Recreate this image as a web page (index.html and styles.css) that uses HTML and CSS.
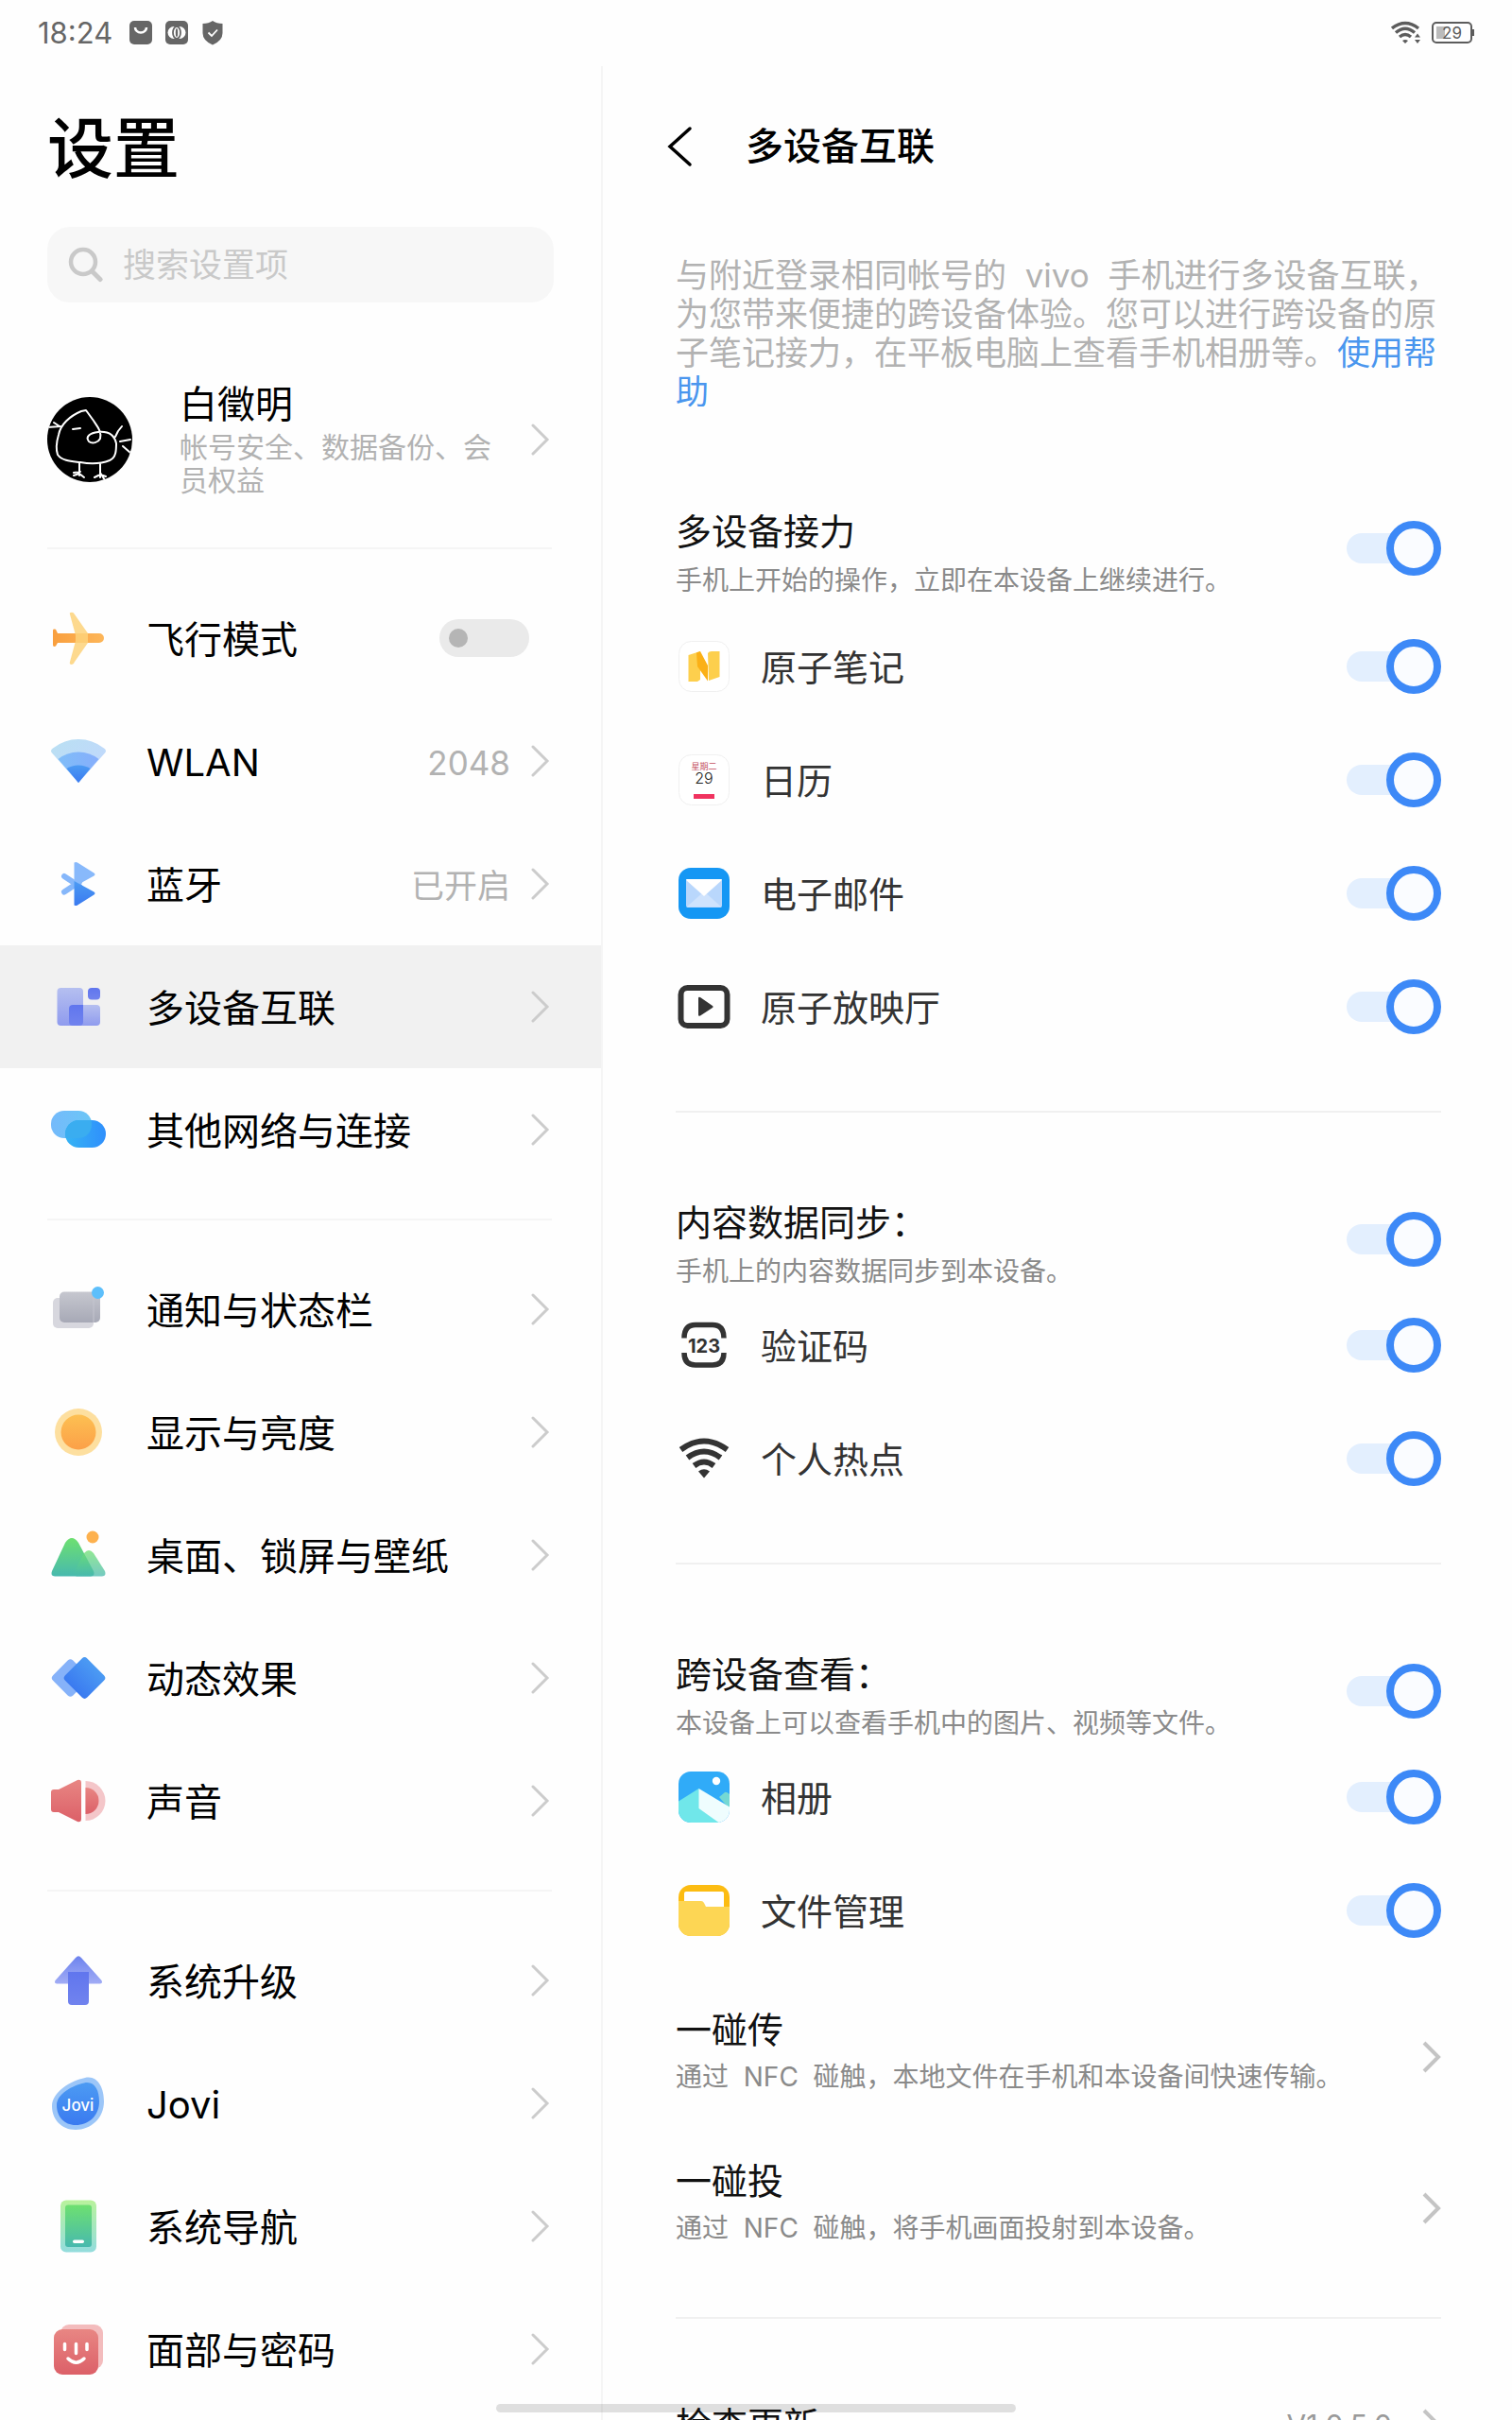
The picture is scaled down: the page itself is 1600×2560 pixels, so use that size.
FILE: index.html
```html
<!DOCTYPE html>
<html lang="zh-CN">
<head>
<meta charset="utf-8">
<meta name="viewport" content="width=device-width, initial-scale=1">
<title>设置</title>
<link rel="stylesheet" href="styles.css">
</head>
<body>
<svg class="defs" aria-hidden="true">
  <defs>
    <linearGradient id="g-orange" x1="0" y1="0" x2="1" y2="0"><stop offset="0" stop-color="#f99f3e"/><stop offset="1" stop-color="#fdb659"/></linearGradient>
    <linearGradient id="g-sun" x1="0" y1="0" x2="0" y2="1"><stop offset="0" stop-color="#fdc052"/><stop offset="1" stop-color="#fca048"/></linearGradient>
    <linearGradient id="g-sky" x1="0" y1="0" x2="1" y2="1"><stop offset="0" stop-color="#b9e0f2"/><stop offset="1" stop-color="#c3d6ff"/></linearGradient>
    <linearGradient id="g-mid" x1="0" y1="0" x2="1" y2="0"><stop offset="0" stop-color="#7fbdf8"/><stop offset="1" stop-color="#86aefc"/></linearGradient>
    <linearGradient id="g-blue" x1="0" y1="0" x2="0" y2="1"><stop offset="0" stop-color="#4c9bf3"/><stop offset="1" stop-color="#3a7af0"/></linearGradient>
    <linearGradient id="g-lilac" x1="0" y1="0" x2="0" y2="1"><stop offset="0" stop-color="#b5bff0"/><stop offset="1" stop-color="#8f9bee"/></linearGradient>
    <linearGradient id="g-indigo" x1="0" y1="0" x2="0" y2="1"><stop offset="0" stop-color="#6076ee"/><stop offset="1" stop-color="#7183ee"/></linearGradient>
    <linearGradient id="g-arrow" x1="0" y1="0" x2="0" y2="1"><stop offset="0" stop-color="#6d83ee"/><stop offset="1" stop-color="#a1acf5"/></linearGradient>
    <linearGradient id="g-grey" x1="0" y1="0" x2="0" y2="1"><stop offset="0" stop-color="#c6c7cf"/><stop offset="1" stop-color="#a7a9b6"/></linearGradient>
    <linearGradient id="g-green" x1="0" y1="0" x2="0" y2="1"><stop offset="0" stop-color="#6ee070"/><stop offset="1" stop-color="#47b9ae"/></linearGradient>
    <linearGradient id="g-lime" x1="0" y1="0" x2="0" y2="1"><stop offset="0" stop-color="#b9f29c"/><stop offset="1" stop-color="#93dcdd"/></linearGradient>
    <linearGradient id="g-red" x1="0" y1="0" x2="0" y2="1"><stop offset="0" stop-color="#e88683"/><stop offset="1" stop-color="#dc6068"/></linearGradient>
    <linearGradient id="g-cyan" x1="0" y1="0" x2="1" y2="0"><stop offset="0" stop-color="#36b4f4"/><stop offset="1" stop-color="#2f8ffc"/></linearGradient>
    <linearGradient id="g-pale" x1="0" y1="0" x2="1" y2="0"><stop offset="0" stop-color="#74bafb"/><stop offset="1" stop-color="#6bc6f6"/></linearGradient>
    <symbol id="chevron" viewBox="0 0 20 34"><path d="M2 2l15 15L2 32" fill="none" stroke="currentColor" stroke-width="3" stroke-linecap="round"/></symbol>
    <symbol id="chevron-bold" viewBox="0 0 20 34"><path d="M2 2l15 15L2 32" fill="none" stroke="currentColor" stroke-width="4"/></symbol>
    <clipPath id="face"><circle cx="45" cy="45" r="45"/></clipPath>
    <clipPath id="tile"><rect x="1" y="1" width="54" height="54" rx="13"/></clipPath>
    <clipPath id="cloud"><rect x="1" y="10" width="43" height="29" rx="14"/></clipPath>
  </defs>
</svg>

<header class="status">
  <time class="clock">18:24</time>
  <svg class="status-icon" viewBox="0 0 26 26"><rect x="1" width="24" height="25" rx="5" fill="#666"/><path d="M7 7a6 5.500 0 0 0 12 0" fill="none" stroke="#fff" stroke-width="2.500"/></svg>
  <svg class="status-icon" viewBox="0 0 26 26"><rect x="1" width="24" height="25" rx="5" fill="#666"/><circle cx="10" cy="12.500" r="6.500" fill="#fff"/><circle cx="16" cy="12.500" r="6.500" fill="#fff"/><ellipse cx="13" cy="12.500" rx="4" ry="6.500" fill="none" stroke="#666" stroke-width="1.800"/><ellipse cx="13" cy="12.500" rx="1.200" ry="4.500" fill="#666"/></svg>
  <svg class="status-icon" viewBox="0 0 26 26"><path d="M13 0Q17 3 23.500 3V13Q23.500 21 13 25.500Q2.500 21 2.500 13V3Q9 3 13 0Z" fill="#666"/><path d="M8.500 12.500l3.500 3.500 6-6.500" fill="none" stroke="#fff" stroke-width="1.800"/></svg>
  <svg class="status-wifi" viewBox="0 0 31 26"><g fill="none" stroke="#5c5c5c" stroke-width="3.400"><path d="M1 8Q15 -3 29 8"/><path d="M5 12.500Q15 4 25 12.500"/><path d="M9 17Q15 12 21 17"/></g><path d="M12 21Q15 19 18 21L15 24Z" fill="#5c5c5c"/><path d="M25 17.500l3-4 3 4zM25 20l3 4 3-4z" fill="#5c5c5c"/></svg>
  <svg class="status-battery" viewBox="0 0 46 26"><rect x="1" y="2" width="41" height="21" rx="4" fill="none" stroke="#5c5c5c" stroke-width="2"/><rect x="5" y="6" width="9" height="13" fill="#bbb"/><path d="M44 9v7" stroke="#5c5c5c" stroke-width="2"/><text x="21.500" y="18.500" text-anchor="middle" class="battery-text">29</text></svg>
</header>

<div class="panes">
  <aside class="sidebar">
    <h1 class="sidebar-title">设置</h1>
    <label class="search">
      <svg class="search-icon" viewBox="0 0 38 38"><circle cx="16" cy="16" r="13" fill="none" stroke="currentColor" stroke-width="4.500"/><path d="M25.500 26L34 34.500" stroke="currentColor" stroke-width="5" stroke-linecap="round"/></svg>
      <input class="search-input" type="search" placeholder="搜索设置项" aria-label="搜索设置项">
    </label>

    <a class="profile" href="#account">
      <svg class="avatar" viewBox="0 0 90 90"><circle cx="45" cy="45" r="45"/><g clip-path="url(#face)" fill="none" stroke="#fff" stroke-width="2" stroke-linecap="round" stroke-linejoin="round"><path d="M56 44C58 36 52 30 49 25L41 14L36 15C24 20 14 29 12 40C9 50 10 58 11 61C16 68 26 68 35 69C46 71 56 71 66 67C73 64 73 56 73 49C71 40 65 36 54 37C45 38 40 42 44 47C48 50 54 48 56 44Z"/><path d="M0 32l14 -1M7 27l6 4M27 34l8-1M72 42l3-6 4-5M77 47l11-2M80 52l8 7M34 70v13M56 71v14M28 83l6-2 5 4M28 80l7-1M50 85l6-3 6 2M56 80l5 8"/></g></svg>
      <span class="profile-text">
        <span class="profile-name">白徵明</span>
        <span class="profile-sub">帐号安全、数据备份、会员权益</span>
      </span>
      <svg class="chevron"><use href="#chevron"/></svg>
    </a>

    <nav class="menu">
      <div class="menu-group">
        <label class="menu-row">
          <svg class="menu-icon" viewBox="0 0 60 60"><path d="M3 22q0-2 3-1.200L8 25H52a5 5 0 0 1 0 10H8L6 38.500q-3 1.200-3-1.200z" fill="url(#g-orange)"/><path d="M21 5q-1-2.300 2-2.300 2 0 3 2.300L40 25v10L26 55q-1 3-3 3-3 0-2-3l6-22v-6z" fill="#fdd27a" opacity=".85"/></svg>
          <span class="menu-label">飞行模式</span>
          <input class="mini-switch" type="checkbox">
        </label>
        <a class="menu-row" href="#wlan">
          <svg class="menu-icon" viewBox="0 0 60 60"><path d="M30 53L1.500 21Q0 18.500 3 16.500Q15 7 30 7T57 16.500Q60 18.500 58.500 21Z" fill="url(#g-sky)"/><path d="M30 53L8.500 28Q18 20.500 30 20.500T51.500 28Z" fill="url(#g-mid)"/><path d="M30 53L17.500 38Q23 34.500 30 34.500T42.500 38Z" fill="url(#g-blue)"/></svg>
          <span class="menu-label">WLAN</span><span class="menu-value">2048</span>
          <svg class="chevron"><use href="#chevron"/></svg>
        </a>
        <a class="menu-row" href="#bluetooth">
          <svg class="menu-icon" viewBox="0 0 60 60"><path d="M15 22L31 32.500M15 38.500L31 28" stroke="#86b7fa" stroke-width="6" stroke-linecap="round"/><path d="M25.500 7.500q2-1 3.500 0L46.500 18.500q2 1.500 0 3L25.500 33z" fill="#88b9fb"/><path d="M25.500 27L46.500 38.500q2 1.500 0 3L29 52.500q-1.500 1-3.500 0z" fill="url(#g-blue)"/></svg>
          <span class="menu-label">蓝牙</span><span class="menu-value">已开启</span>
          <svg class="chevron"><use href="#chevron"/></svg>
        </a>
        <a class="menu-row is-active" href="#devices" aria-current="page">
          <svg class="menu-icon" viewBox="0 0 60 60"><rect x="7.500" y="10" width="27.500" height="40" rx="4" fill="url(#g-lilac)"/><rect x="20" y="28" width="33" height="22" rx="4" fill="url(#g-lilac)"/><path d="M20 32q0-4 4-4h11v18q0 4-4 4h-7q-4 0-4-4z" fill="url(#g-indigo)"/><rect x="40" y="10" width="13" height="12.500" rx="4" fill="url(#g-indigo)"/></svg>
          <span class="menu-label">多设备互联</span>
          <svg class="chevron"><use href="#chevron"/></svg>
        </a>
        <a class="menu-row" href="#network">
          <svg class="menu-icon" viewBox="0 0 60 60"><rect x="1" y="10" width="43" height="29" rx="14" fill="url(#g-pale)"/><rect x="16" y="20" width="43" height="29" rx="14.500" fill="url(#g-cyan)"/><rect x="16" y="20" width="43" height="29" rx="14.500" fill="#3aadf0" clip-path="url(#cloud)"/></svg>
          <span class="menu-label">其他网络与连接</span>
          <svg class="chevron"><use href="#chevron"/></svg>
        </a>
      </div>

      <div class="menu-group">
        <a class="menu-row" href="#notice">
          <svg class="menu-icon" viewBox="0 0 60 60"><rect x="3" y="18" width="43" height="32" rx="5" fill="#d7d7de"/><rect x="10" y="11.500" width="43" height="32.500" rx="5" fill="url(#g-grey)"/><path d="M46 12v32" stroke="#c4c5cf" stroke-width="1"/><circle cx="50.500" cy="12.500" r="6.500" fill="#5dbffb"/></svg>
          <span class="menu-label">通知与状态栏</span>
          <svg class="chevron"><use href="#chevron"/></svg>
        </a>
        <a class="menu-row" href="#display">
          <svg class="menu-icon" viewBox="0 0 60 60"><circle cx="30" cy="30" r="25" fill="#fddf9f"/><circle cx="30" cy="30" r="18.500" fill="url(#g-sun)"/></svg>
          <span class="menu-label">显示与亮度</span>
          <svg class="chevron"><use href="#chevron"/></svg>
        </a>
        <a class="menu-row" href="#wallpaper">
          <svg class="menu-icon" viewBox="0 0 60 60"><path d="M2 47L16 17q7-10 14 0L46 47q2 5-3 5.500H5Q0 52 2 47z" fill="url(#g-green)"/><path d="M26 47L36 28q5-6 10 0L58 47q2 5-3 5.500H28q-4-1-2-5.500z" fill="url(#g-green)" opacity=".75"/><circle cx="45" cy="11" r="6.500" fill="#fdb14e"/></svg>
          <span class="menu-label">桌面、锁屏与壁纸</span>
          <svg class="chevron"><use href="#chevron"/></svg>
        </a>
        <a class="menu-row" href="#motion">
          <svg class="menu-icon" viewBox="0 0 60 60"><rect x="6.500" y="15" width="30" height="30" rx="4" transform="rotate(45 21.500 30)" fill="#86b2f9"/><rect x="20" y="13.500" width="33" height="33" rx="4" transform="rotate(45 36.500 30)" fill="url(#g-blue)"/></svg>
          <span class="menu-label">动态效果</span>
          <svg class="chevron"><use href="#chevron"/></svg>
        </a>
        <a class="menu-row" href="#sound">
          <svg class="menu-icon" viewBox="0 0 60 60"><path d="M1 21q0-3 3-3h5L29 8q4-1 4 3v38q0 4-4 3L9 42H4q-3 0-3-3z" fill="url(#g-red)"/><path d="M37.500 9a21 21 0 0 1 0 42z" fill="#f4c6c9"/><path d="M37.500 16a14 14 0 0 1 0 28z" fill="url(#g-red)"/></svg>
          <span class="menu-label">声音</span>
          <svg class="chevron"><use href="#chevron"/></svg>
        </a>
      </div>

      <div class="menu-group">
        <a class="menu-row" href="#update">
          <svg class="menu-icon" viewBox="0 0 60 60"><path d="M27 6q3-3.500 6 0L54.500 30q1.500 3-1.500 3.500H7Q4 33 5.500 30z" fill="url(#g-arrow)"/><path d="M19 21h22v31q0 4-4 4H23q-4 0-4-4z" fill="url(#g-indigo)"/></svg>
          <span class="menu-label">系统升级</span>
          <svg class="chevron"><use href="#chevron"/></svg>
        </a>
        <a class="menu-row" href="#jovi">
          <svg class="menu-icon" viewBox="0 0 60 60"><path d="M37 3C50 0 57 13 57 28C57 46 43 58 27 58C12 58 2 47 2 33C2 18 22 6 37 3Z" fill="#9cc6f8"/><path d="M36 8.500C47 6 52 16 52 28C52 43 41 53 27 53C15 53 7 44 7 32C7 20 24 11 36 8.500Z" fill="url(#g-blue)"/><text x="29.500" y="38" text-anchor="middle" class="jovi-text">Jovi</text></svg>
          <span class="menu-label">Jovi</span>
          <svg class="chevron"><use href="#chevron"/></svg>
        </a>
        <a class="menu-row" href="#navigation">
          <svg class="menu-icon" viewBox="0 0 60 60"><rect x="11" y="2.500" width="38" height="55" rx="6" fill="url(#g-lime)"/><rect x="16" y="7.500" width="28" height="44.500" rx="3" fill="url(#g-green)"/><rect x="24" y="44.500" width="12" height="3.500" rx="1.700" fill="#fff"/></svg>
          <span class="menu-label">系统导航</span>
          <svg class="chevron"><use href="#chevron"/></svg>
        </a>
        <a class="menu-row" href="#security">
          <svg class="menu-icon" viewBox="0 0 60 60"><rect x="11" y="4" width="45" height="47" rx="9" fill="#f3bcbd"/><rect x="4" y="9" width="47" height="48" rx="9" fill="url(#g-red)"/><path d="M15.500 24.500v6M39 24.500v6M27.500 24.500v10M19 40q8.500 8.500 17 0" fill="none" stroke="#fff" stroke-width="3.500" stroke-linecap="round"/></svg>
          <span class="menu-label">面部与密码</span>
          <svg class="chevron"><use href="#chevron"/></svg>
        </a>
      </div>
    </nav>
  </aside>

  <main class="detail">
    <header class="detail-header">
      <button class="back" type="button" aria-label="返回"><svg class="back-icon" viewBox="0 0 28 44"><path d="M25 3L4 22l21 19" fill="none" stroke="currentColor" stroke-width="3.500" stroke-linecap="round"/></svg></button>
      <h2 class="detail-title">多设备互联</h2>
    </header>

    <p class="intro">与附近登录相同帐号的&nbsp; vivo &nbsp;手机进行多设备互联，为您带来便捷的跨设备体验。您可以进行跨设备的原子笔记接力，在平板电脑上查看手机相册等。<a class="help" href="#help">使用帮助</a></p>

    <section class="section section-roomy">
      <label class="section-head">
        <span class="section-text"><span class="section-title">多设备接力</span><span class="section-sub">手机上开始的操作，立即在本设备上继续进行。</span></span>
        <input class="switch" type="checkbox" checked>
      </label>
      <label class="item">
        <svg class="item-icon" viewBox="0 0 56 56"><rect x="1.500" y="1.500" width="53" height="53" rx="13" fill="#fff" stroke="#f0f0f0"/><path d="M11.500 16l12.500-4V42l-3 2h-9.500z" fill="#fdcf4d"/><path d="M32 14q1-2 4-2h8.500v27L33 43z" fill="#fdcf4d"/><path d="M20 13.500l4-1.500L32 27V43.500L21 28z" fill="#fbb016"/></svg>
        <span class="item-label">原子笔记</span><input class="switch" type="checkbox" checked>
      </label>
      <label class="item">
        <svg class="item-icon" viewBox="0 0 56 56"><rect x="1.500" y="1.500" width="53" height="53" rx="13" fill="#fff" stroke="#f0f0f0"/><text x="28" y="17" text-anchor="middle" class="cal-week">星期二</text><text x="28" y="32" text-anchor="middle" class="cal-day">29</text><rect x="17" y="43" width="22" height="5" fill="#f0335f"/></svg>
        <span class="item-label">日历</span><input class="switch" type="checkbox" checked>
      </label>
      <label class="item">
        <svg class="item-icon" viewBox="0 0 56 56"><rect x="1" y="1" width="54" height="54" rx="13" fill="#1597f4"/><rect x="9" y="13" width="38" height="30" rx="2" fill="#b9d7fc"/><path d="M9.500 42.500L28 26l18.500 16.500z" fill="#cfe3fd"/><path d="M9 14q0-1 1-1h36q1 0 1 1L28 31z" fill="#fff"/></svg>
        <span class="item-label">电子邮件</span><input class="switch" type="checkbox" checked>
      </label>
      <label class="item">
        <svg class="item-icon" viewBox="0 0 56 56"><rect x="3.500" y="8" width="49" height="40" rx="7" fill="none" stroke="#333" stroke-width="6"/><path d="M22 19q0-2 2-1l13 9q1.500 1 0 2L24 37.500q-2 1-2-1z" fill="#333"/></svg>
        <span class="item-label">原子放映厅</span><input class="switch" type="checkbox" checked>
      </label>
    </section>

    <section class="section">
      <label class="section-head">
        <span class="section-text"><span class="section-title">内容数据同步：</span><span class="section-sub">手机上的内容数据同步到本设备。</span></span>
        <input class="switch" type="checkbox" checked>
      </label>
      <label class="item">
        <svg class="item-icon" viewBox="0 0 56 56"><path d="M7 20.500Q7 6.500 19 6.500H37Q49 6.500 49 20.500M7 36Q7 49 19 49H37Q49 49 49 36" fill="none" stroke="#333" stroke-width="5.500"/><text x="28" y="36" text-anchor="middle" class="code-text">123</text></svg>
        <span class="item-label">验证码</span><input class="switch" type="checkbox" checked>
      </label>
      <label class="item">
        <svg class="item-icon" viewBox="0 0 56 56"><g fill="none" stroke="#333" stroke-width="6"><path d="M3.500 18.500Q28 .5 52.500 18.500"/><path d="M10.500 27Q28 14 45.500 27"/><path d="M17.500 35.500Q28 27.500 38.500 35.500"/></g><path d="M22 41.500Q28 37 34 41.500L28 48.500Z" fill="#333"/></svg>
        <span class="item-label">个人热点</span><input class="switch" type="checkbox" checked>
      </label>
    </section>

    <section class="section">
      <label class="section-head">
        <span class="section-text"><span class="section-title">跨设备查看：</span><span class="section-sub">本设备上可以查看手机中的图片、视频等文件。</span></span>
        <input class="switch" type="checkbox" checked>
      </label>
      <label class="item">
        <svg class="item-icon" viewBox="0 0 56 56"><g clip-path="url(#tile)"><path d="M0 0h56v56H0z" fill="#30abf8"/><path d="M44 28l6-5q2-1 6 3v16z" fill="#74d8d4"/><path d="M0 33L22.500 19L46 56H0z" fill="#70e7ea"/><path d="M22.500 19L56 39v17H45L22.500 40z" fill="#effdfe"/><circle cx="41" cy="11" r="4.200" fill="#fff"/></g></svg>
        <span class="item-label">相册</span><input class="switch" type="checkbox" checked>
      </label>
      <label class="item">
        <svg class="item-icon" viewBox="0 0 56 56"><g clip-path="url(#tile)"><path d="M0 0h56v56H0z" fill="#fcbc12"/><rect x="7" y="8" width="42" height="22" rx="2" fill="#fff"/><path d="M0 18h25q2 0 3 2l2 4h26v32H0z" fill="#fdd654"/></g></svg>
        <span class="item-label">文件管理</span><input class="switch" type="checkbox" checked>
      </label>

      <div class="links">
        <a class="link-row" href="#send">
          <span class="section-text"><span class="section-title">一碰传</span><span class="section-sub">通过&nbsp; NFC &nbsp;碰触，本地文件在手机和本设备间快速传输。</span></span>
          <svg class="chevron chevron-bold"><use href="#chevron-bold"/></svg>
        </a>
        <a class="link-row" href="#cast">
          <span class="section-text"><span class="section-title">一碰投</span><span class="section-sub">通过&nbsp; NFC &nbsp;碰触，将手机画面投射到本设备。</span></span>
          <svg class="chevron chevron-bold"><use href="#chevron-bold"/></svg>
        </a>
      </div>
    </section>

    <section class="about">
      <a class="about-row" href="#version">
        <span class="section-title">检查更新</span><span class="version">V1.0.5.0</span>
        <svg class="chevron chevron-bold"><use href="#chevron-bold"/></svg>
      </a>
    </section>
  </main>
</div>
<div class="home-bar"></div>
</body>
</html>
```
FILE: styles.css
```css
*, *::before, *::after { box-sizing: border-box; }

body {
  margin: 0;
  height: 100vh;
  display: flex;
  flex-direction: column;
  overflow: hidden;
  background: #fefefe;
  color: #000;
  font-family: Inter, "Noto Sans CJK SC", sans-serif;
}

a { color: inherit; text-decoration: none; }
h1, h2, p { margin: 0; }
svg { display: block; flex: none; }
.defs { position: absolute; width: 0; height: 0; }

/* Status bar */
.status {
  flex: none;
  height: 70px;
  padding: 0 39px 0 40px;
  display: flex;
  align-items: center;
  gap: 12px;
}
.clock { color: #666; font-size: 31px; line-height: 30px; margin-right: 5px; }
.status-icon { width: 26px; height: 26px; }
.status-wifi { width: 31px; height: 26px; margin-left: auto; }
.status-battery { width: 46px; height: 26px; }
.battery-text { font-size: 17px; fill: #5c5c5c; }

.panes { flex: 1; min-height: 0; display: flex; }

/* Sidebar */
.sidebar {
  flex: none;
  width: 40%;
  max-width: 638px;
  border-right: 2px solid #f5f5f5;
  overflow: hidden;
}
.sidebar-title {
  margin: 52px 50px 46px;
  font-size: 70px;
  line-height: 72px;
  font-weight: 500;
}
.search {
  margin: 0 50px;
  height: 80px;
  padding: 0 22px;
  display: flex;
  align-items: center;
  gap: 20px;
  border-radius: 24px;
  background: #f7f7f7;
  color: #c9c9c9;
}
.search-icon { width: 38px; height: 38px; }
.search-input {
  flex: 1;
  min-width: 0;
  padding: 0;
  border: 0;
  outline: 0;
  background: none;
  font: inherit;
  font-size: 35px;
  color: #000;
}
.search-input::placeholder { color: #c9c9c9; opacity: 1; }

.profile {
  margin: 0 52px 0 50px;
  padding: 82px 2px 51px 0;
  display: flex;
  align-items: center;
  border-bottom: 2px solid #f5f5f5;
}
.avatar { width: 90px; height: 90px; }
.profile-text { flex: 1; display: grid; gap: 2px; padding: 0 38px 2px 50px; }
.profile-name { font-size: 40px; line-height: 52px; }
.profile-sub { font-size: 30px; line-height: 35px; color: #b2b2b2; }

.chevron { width: 20px; height: 34px; color: #ccc; }
.chevron-bold { color: #c4c4c4; }

.menu { padding-top: 29px; }
.menu-group + .menu-group::before {
  content: "";
  display: block;
  height: 2px;
  margin: 29px 52px 29px 50px;
  background: #f5f5f5;
}
.menu-row {
  height: 130px;
  padding: 0 54px 0 53px;
  display: flex;
  align-items: center;
}
.menu-row.is-active { background: #f1f1f1; }
.menu-icon { width: 60px; height: 60px; }
.menu-label { flex: 1; padding: 3px 0 0 42px; font-size: 40px; line-height: 60px; }
.menu-value { padding-top: 3px; margin-right: 22px; font-size: 35px; line-height: 60px; color: #b2b2b2; }
.jovi-text { font-size: 17px; font-weight: 500; fill: #fff; }

.mini-switch {
  appearance: none;
  width: 95px;
  height: 40px;
  margin: 0 22px 0 0;
  padding: 10px;
  border-radius: 20px;
  background: #eaeaea;
}
.mini-switch::before {
  content: "";
  display: block;
  width: 20px;
  height: 20px;
  border-radius: 50%;
  background: #b5b5b5;
}
.mini-switch:checked::before { margin-left: auto; background: #3d89f5; }

/* Detail pane */
.detail { flex: 1; min-width: 0; padding: 0 75px 0 77px; overflow: hidden; }
.detail-header { height: 170px; display: flex; align-items: center; gap: 56px; }
.back { margin: 0 0 0 -10px; padding: 0; border: 0; background: none; color: #000; }
.back-icon { width: 28px; height: 44px; }
.detail-title { font-size: 40px; line-height: 60px; font-weight: 500; }

.intro {
  margin: 31px 0 101px;
  font-size: 35px;
  line-height: 41px;
  color: #b2b2b2;
}
.help { color: #4a96ee; }

.section + .section,
.about {
  margin-top: 50px;
  padding-top: 90px;
  border-top: 2px solid #f0f0f0;
}
.section-head { display: flex; align-items: flex-start; }
.section-roomy .section-head { padding-bottom: 13px; }
.section-head .switch { margin-top: 15px; }
.section-text { flex: 1; display: grid; gap: 8px; }
.section-title { font-size: 38px; line-height: 52px; color: #111; }
.section-sub { font-size: 28px; line-height: 36px; color: #8a8a8a; }

.item { height: 120px; padding-left: 2px; display: flex; align-items: center; }
.item-icon { width: 56px; height: 56px; }
.item-label { flex: 1; padding: 2px 0 0 32px; font-size: 38px; line-height: 52px; color: #333; }
.cal-week { font-size: 9px; fill: #c4505f; }
.cal-day { font-size: 16px; font-weight: 300; fill: #222; }
.code-text { font-size: 20px; font-weight: 700; fill: #333; }

.switch {
  appearance: none;
  flex: none;
  width: 100px;
  height: 58px;
  margin: 0;
  display: grid;
  align-items: center;
}
.switch::before,
.switch::after { content: ""; grid-area: 1 / 1; }
.switch::before { width: 90px; height: 32px; border-radius: 16px; background: #e3effe; }
.switch::after {
  width: 58px;
  height: 58px;
  border: 8px solid #b5b5b5;
  border-radius: 50%;
  background: #fafcff;
}
.switch:checked::after { justify-self: end; border-color: #3d89f7; }

.links { padding-top: 15px; }
.link-row { height: 160px; display: flex; align-items: center; }
.link-row .section-text { gap: 6px; padding-bottom: 16px; }

.about { margin-top: 35px; padding-top: 32px; }
.about-row { height: 160px; display: flex; align-items: center; }
.about-row .section-title { flex: 1; }
.version { margin-right: 32px; font-size: 30px; line-height: 52px; color: #9a9a9a; }

.home-bar {
  position: fixed;
  left: 50%;
  bottom: 8px;
  width: 550px;
  height: 9px;
  margin-left: -275px;
  border-radius: 5px;
  background: rgba(0, 0, 0, .12);
}
```
